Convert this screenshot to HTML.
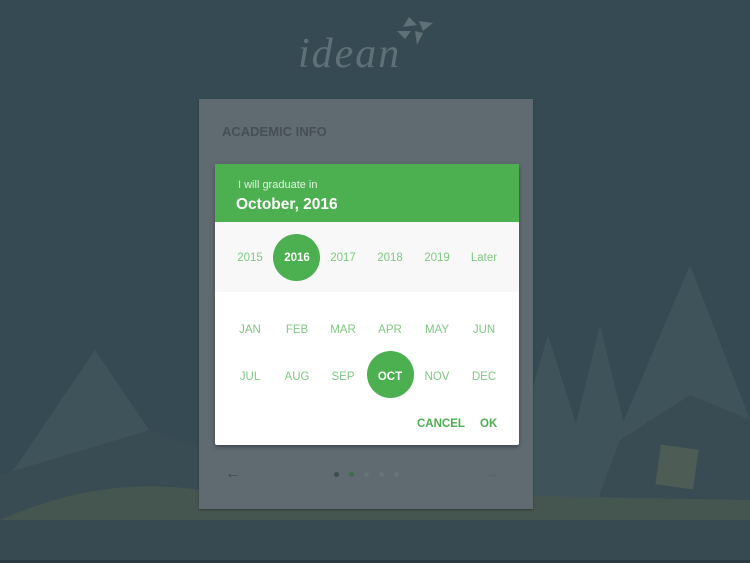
<!DOCTYPE html>
<html><head><style>
body{margin:0;width:750px;height:563px;overflow:hidden;background:#364a53;font-family:"Liberation Sans",sans-serif;position:relative}
.abs{position:absolute}
.card{left:199px;top:99px;width:334px;height:410px;background:#5f6b71;box-shadow:0 1px 2px rgba(0,0,0,.3)}
.dlg{left:215px;top:164px;width:304px;height:281px;background:#fff;border-radius:2px;box-shadow:0 2px 4px rgba(0,0,0,.35);overflow:hidden}
.hdr{height:58px;background:#4caf50;color:#fff;position:relative}
.yr{height:70px;background:#f8f8f8;position:relative}
.c{position:absolute;width:46px;text-align:center;font-size:11.5px;color:#81c784;transform:translateX(-23px)}
.sel{position:absolute;width:47px;height:47px;border-radius:50%;background:#4caf50}
</style></head><body>
<svg class="abs" style="left:0;top:0" width="750" height="563">
<polygon points="0,490 95,350 190,490" fill="#3f535b"/>
<polygon points="500,500 548,335 600,500" fill="#3f535b"/>
<polygon points="560,490 600,325 640,490" fill="#3f535b"/>
<polygon points="590,500 690,265 750,420 750,500" fill="#3f535b"/>
<polygon points="0,520 0,475 150,430 260,470 260,520" fill="#394c53"/>
<polygon points="590,520 620,440 690,395 750,420 750,520" fill="#394c53"/>
<path d="M0,520 Q100,475 200,490 L750,500 L750,530 L0,530Z" fill="#45554f"/>
<rect x="0" y="520" width="750" height="43" fill="#384a51"/>
<rect x="658" y="447" width="38" height="40" fill="#4d5c55" transform="rotate(8 677 467)"/>
<rect x="0" y="560" width="750" height="3" fill="#2a3a41"/>
</svg>
<div class="abs" style="left:298px;top:30px;font-family:'Liberation Serif',serif;font-style:italic;font-size:42px;color:#5f7077;letter-spacing:2px">idean</div>
<svg class="abs" style="left:395px;top:17px" width="40" height="30"><polygon points="14,0 22,8 8,10" fill="#5f7077"/><polygon points="24,4 38,6 28,14" fill="#5f7077"/><polygon points="2,14 16,14 10,22" fill="#5f7077"/><polygon points="20,14 28,16 22,28" fill="#5f7077"/></svg>
<div class="abs card">
<div class="abs" style="left:23px;top:25px;font-size:13px;font-weight:bold;color:#454f55">ACADEMIC INFO</div>
<div class="abs" style="left:26px;top:366px;color:#3e4b51;font-size:16px">&#8592;</div>
<div class="abs" style="left:284px;top:366px;color:#56636a;font-size:16px">&#8594;</div>
<div class="abs" style="left:135px;top:373px;width:5px;height:5px;border-radius:50%;background:#3e4b51"></div>
<div class="abs" style="left:150px;top:373px;width:5px;height:5px;border-radius:50%;background:#3f6b4b"></div>
<div class="abs" style="left:165px;top:373px;width:5px;height:5px;border-radius:50%;background:#67737a"></div>
<div class="abs" style="left:180px;top:373px;width:5px;height:5px;border-radius:50%;background:#67737a"></div>
<div class="abs" style="left:195px;top:373px;width:5px;height:5px;border-radius:50%;background:#67737a"></div>
</div>
<div class="abs dlg">
<div class="hdr"><div class="abs" style="left:23px;top:15px;font-size:11px;color:#e3f2e3">I will graduate in</div><div class="abs" style="left:21px;top:32px;font-size:15.5px;font-weight:bold">October, 2016</div></div>
<div class="yr">
<div class="sel" style="left:58px;top:12px"></div>
<div class="c" style="left:35px;top:30px">2015</div><div class="c" style="left:82px;top:30px;color:#fff;font-weight:bold">2016</div><div class="c" style="left:128px;top:30px">2017</div><div class="c" style="left:175px;top:30px">2018</div><div class="c" style="left:222px;top:30px">2019</div><div class="c" style="left:269px;top:30px">Later</div>
</div>
<div style="position:relative;height:153px">
<div class="sel" style="left:152px;top:59px"></div>
<div class="c" style="left:35px;top:32px">JAN</div><div class="c" style="left:82px;top:32px">FEB</div><div class="c" style="left:128px;top:32px">MAR</div><div class="c" style="left:175px;top:32px">APR</div><div class="c" style="left:222px;top:32px">MAY</div><div class="c" style="left:269px;top:32px">JUN</div>
<div class="c" style="left:35px;top:79px">JUL</div><div class="c" style="left:82px;top:79px">AUG</div><div class="c" style="left:128px;top:79px">SEP</div><div class="c" style="left:175px;top:79px;color:#fff;font-weight:bold">OCT</div><div class="c" style="left:222px;top:79px">NOV</div><div class="c" style="left:269px;top:79px">DEC</div>
<div class="abs" style="left:202px;top:126px;font-size:11.5px;font-weight:bold;color:#4caf50">CANCEL</div>
<div class="abs" style="left:265px;top:126px;font-size:11.5px;font-weight:bold;color:#4caf50">OK</div>
</div>
</div>
</body></html>
